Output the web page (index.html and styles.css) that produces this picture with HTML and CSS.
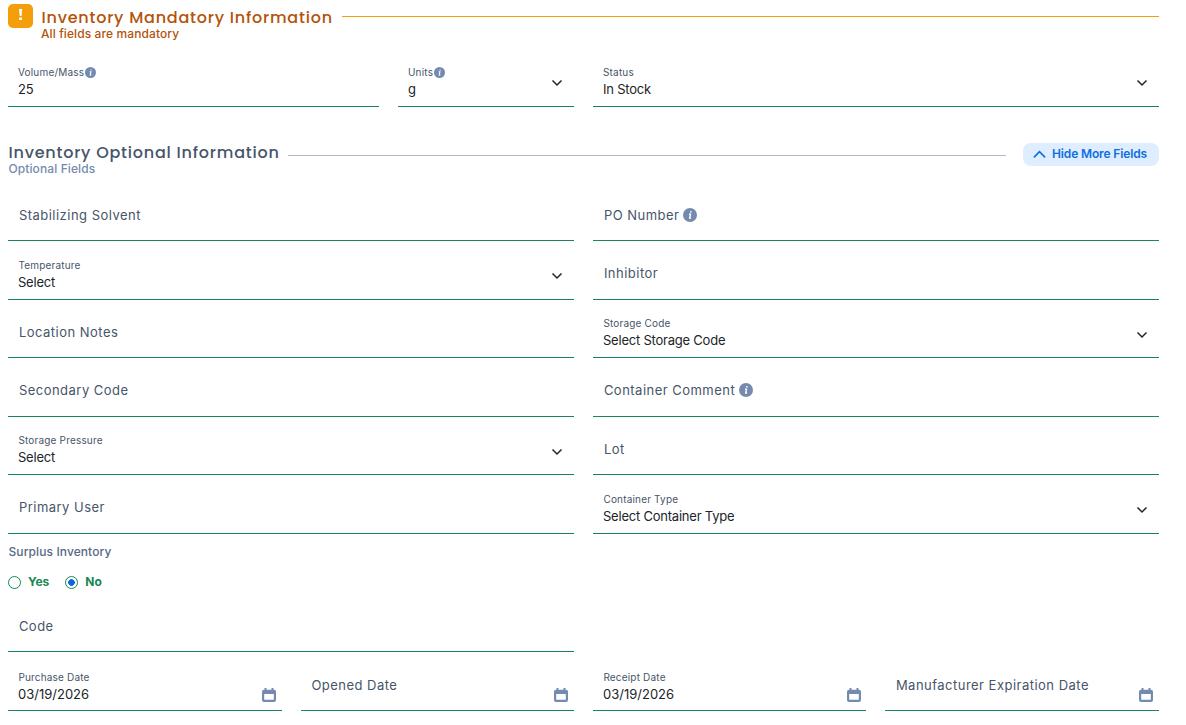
FILE: index.html
```html
<!DOCTYPE html>
<html lang="en">
<head>
  <meta charset="UTF-8">
  <meta name="viewport" content="width=device-width, initial-scale=1.0">
  <title>Inventory Information</title>
  <link rel="stylesheet" href="styles.css">
</head>
<body>

  <!-- shared icons -->
  <svg class="sprite" aria-hidden="true">
    <symbol id="info" viewBox="0 0 14 14">
      <circle cx="7" cy="7" r="7" fill="#748aae"/>
      <path d="M7.8 3.1v1.4M6 6.1h1.5l-.8 4h1.4" fill="none" stroke="#fff" stroke-width="1.4"/>
    </symbol>
    <symbol id="chevron" viewBox="0 0 12 8">
      <path d="M1.5 1.5L6 6l4.5-4.5" fill="none" stroke="currentColor" stroke-width="1.5"/>
    </symbol>
    <symbol id="calendar" viewBox="0 0 14 14">
      <path d="M3.500 0v3M10.500 0v3" fill="none" stroke="#748aae" stroke-width="2"/>
      <path fill-rule="evenodd" d="M2 1.700h10a2 2 0 0 1 2 2V12a2 2 0 0 1-2 2H2a2 2 0 0 1-2-2V3.700a2 2 0 0 1 2-2zM2.200 6v5.800h9.600V6z" fill="#748aae"/>
    </symbol>
  </svg>

  <main class="inventory">
    <header class="section-head mandatory">
      <span class="alert-icon">
        <svg viewBox="0 0 25 24"><path d="M11 5h3.200l-.7 7h-1.800zM11.200 13.500h2.800v2.600h-2.800z" fill="#fff"/></svg>
      </span>
      <div class="titles">
        <h2>Inventory Mandatory Information</h2>
        <p>All fields are mandatory</p>
      </div>
      <span class="rule"></span>
    </header>

    <section class="fields mandatory-fields">
      <div class="field">
        <label>Volume/Mass <svg class="info"><use href="#info"/></svg></label>
        <span class="value">25</span>
      </div>
      <div class="field">
        <label>Units <svg class="info"><use href="#info"/></svg></label>
        <span class="value">g</span>
        <svg class="chevron"><use href="#chevron"/></svg>
      </div>
      <div class="field">
        <label>Status</label>
        <span class="value">In Stock</span>
        <svg class="chevron"><use href="#chevron"/></svg>
      </div>
    </section>

    <header class="section-head optional">
      <div class="titles">
        <h2>Inventory Optional Information</h2>
        <p>Optional Fields</p>
      </div>
      <span class="rule"></span>
      <button class="btn-toggle">
        <svg viewBox="0 0 14 8"><path d="M1.5 7L7 1.5 12.5 7" fill="none" stroke="currentColor" stroke-width="1.8" stroke-linecap="round"/></svg>
        <span>Hide More Fields</span>
      </button>
    </header>

    <section class="fields two-columns">
      <div class="field empty"><label>Stabilizing Solvent</label></div>
      <div class="field empty"><label>PO Number <svg class="info"><use href="#info"/></svg></label></div>
      <div class="field">
        <label>Temperature</label>
        <span class="value">Select</span>
        <svg class="chevron"><use href="#chevron"/></svg>
      </div>
      <div class="field empty"><label>Inhibitor</label></div>
      <div class="field empty"><label>Location Notes</label></div>
      <div class="field">
        <label>Storage Code</label>
        <span class="value">Select Storage Code</span>
        <svg class="chevron"><use href="#chevron"/></svg>
      </div>
      <div class="field empty"><label>Secondary Code</label></div>
      <div class="field empty"><label>Container Comment <svg class="info"><use href="#info"/></svg></label></div>
      <div class="field">
        <label>Storage Pressure</label>
        <span class="value">Select</span>
        <svg class="chevron"><use href="#chevron"/></svg>
      </div>
      <div class="field empty"><label>Lot</label></div>
      <div class="field empty"><label>Primary User</label></div>
      <div class="field">
        <label>Container Type</label>
        <span class="value">Select Container Type</span>
        <svg class="chevron"><use href="#chevron"/></svg>
      </div>
    </section>

    <section class="surplus">
      <p>Surplus Inventory</p>
      <div class="options">
        <label><input type="radio" name="surplus"><span>Yes</span></label>
        <label><input type="radio" name="surplus" checked><span>No</span></label>
      </div>
    </section>

    <section class="fields two-columns">
      <div class="field empty"><label>Code</label></div>
    </section>

    <section class="fields dates">
      <div class="field">
        <label>Purchase Date</label>
        <span class="value">03/19/2026</span>
        <svg class="calendar"><use href="#calendar"/></svg>
      </div>
      <div class="field empty">
        <label>Opened Date</label>
        <svg class="calendar"><use href="#calendar"/></svg>
      </div>
      <div class="field">
        <label>Receipt Date</label>
        <span class="value">03/19/2026</span>
        <svg class="calendar"><use href="#calendar"/></svg>
      </div>
      <div class="field empty">
        <label>Manufacturer Expiration Date</label>
        <svg class="calendar"><use href="#calendar"/></svg>
      </div>
    </section>
  </main>

</body>
</html>
```
FILE: styles.css
```css
* {
  box-sizing: border-box;
}
body {
  margin: 0;
  font-family: Inter, sans-serif;
  background-color: #fff;
  color: #212529;
}
.sprite {
  display: none;
}
.inventory {
  width: 1151px;
  margin-left: 8px;
  padding-top: 4px;
}

/* section titles */
.section-head {
  display: flex;
  align-items: flex-start;
}
.section-head h2 {
  height: 22px;
  margin: 0;
  padding: 4px 0 0 0.5px;
  font-family: Poppins, Inter, sans-serif;
  font-size: 16px;
  font-weight: 500;
  line-height: 18px;
  letter-spacing: 0.78px;
  white-space: nowrap;
}
.section-head p {
  margin: 0;
  font-size: 12px;
  font-weight: 500;
  line-height: 14px;
  letter-spacing: 0.1px;
}
.titles {
  flex: none;
}
.rule {
  flex: 1;
  height: 1px;
}
.mandatory {
  height: 44.5px;
  color: #b45309;
}
.mandatory .titles {
  width: 292px;
  margin-left: 8px;
  padding-top: 1px;
}
.mandatory .rule {
  margin: 12px 0 0 9px;
  background-color: #f59e0b;
}
.alert-icon {
  width: 25px;
  height: 24px;
  border-radius: 5px;
  background-color: #f59e0b;
}
.alert-icon svg {
  display: block;
}
.optional {
  height: 75.5px;
  padding-top: 33px;
  color: #475569;
}
.optional .titles {
  width: 271px;
}
.optional p {
  padding-left: 0.5px;
  color: #748aae;
}
.optional .rule {
  margin: 15px 17px 0 9px;
  background-color: #b0bccb;
}
.btn-toggle {
  display: flex;
  align-items: center;
  gap: 6px;
  width: 136px;
  height: 23px;
  margin-top: 3px;
  padding: 0 0 2px 10px;
  border: none;
  border-radius: 8px;
  background-color: #deedff;
  color: #0d6fe0;
  font-family: inherit;
  font-size: 12px;
  font-weight: 600;
  letter-spacing: -0.14px;
  white-space: nowrap;
  cursor: pointer;
}
.btn-toggle svg {
  width: 13px;
  height: 8px;
}

/* fields */
.fields {
  display: grid;
  column-gap: 19px;
}
.mandatory-fields {
  grid-template-columns: 371px 176px 566px;
}
.two-columns {
  grid-template-columns: 1fr 1fr;
}
.dates {
  grid-template-columns: 273.5px 273.5px 273px 274px;
}
.field {
  display: grid;
  grid-template-columns: 1fr auto;
  grid-template-rows: 15px 19px;
  height: 58.5px;
  padding: 16.5px 10px 0;
  border-bottom: 1px solid #198754;
}
.mandatory-fields .field {
  padding-top: 16px;
}
.field label {
  display: flex;
  align-items: center;
  gap: 2px;
  padding-left: 0.4px;
  font-size: 10px;
  line-height: 15px;
  letter-spacing: 0.18px;
  color: #475569;
}
.mandatory-fields label {
  padding-left: 0;
  gap: 1px;
}
.field .value {
  grid-row: 2;
  font-size: 13px;
  line-height: 19px;
  letter-spacing: -0.22px;
}
.field.empty {
  padding-top: 15.7px;
}
.field.empty label {
  grid-row: 1 / 3;
  padding-left: 0.9px;
  gap: 4px;
  font-size: 13px;
  letter-spacing: 0.48px;
}
.info {
  width: 11px;
  height: 11px;
}
.empty .info {
  width: 14px;
  height: 14px;
  margin-bottom: 1px;
}
.chevron {
  grid-column: 2;
  grid-row: 1 / 3;
  align-self: center;
  width: 12px;
  height: 8px;
  margin-top: 3px;
  margin-right: 1px;
}
.calendar {
  grid-column: 2;
  grid-row: 1 / 3;
  align-self: end;
  width: 14px;
  height: 14px;
  margin-right: -4px;
}
.dates .field {
  padding-top: 18px;
}
.dates .value {
  letter-spacing: 0;
}
.dates .field.empty {
  padding-top: 16px;
}
.dates .field:not(.empty) .calendar {
  margin-right: -4.5px;
  margin-bottom: 2px;
}

/* surplus inventory */
.surplus {
  height: 60px;
  padding-top: 10px;
}
.surplus p {
  margin: 0;
  padding-left: 0.5px;
  font-size: 12px;
  font-weight: 500;
  line-height: 16px;
  letter-spacing: 0.1px;
  color: #566987;
}
.options {
  display: flex;
  gap: 16px;
  margin-top: 14px;
}
.options label {
  display: flex;
  align-items: center;
  gap: 7px;
  font-size: 12px;
  font-weight: 700;
  line-height: 16px;
  color: #198754;
}
.options input {
  appearance: none;
  width: 13px;
  height: 13px;
  margin: 1px 0 0;
  border: 1px solid #198754;
  border-radius: 50%;
}
.options input:checked {
  background: radial-gradient(circle, #0866e8 3px, transparent 3.6px);
}
```
